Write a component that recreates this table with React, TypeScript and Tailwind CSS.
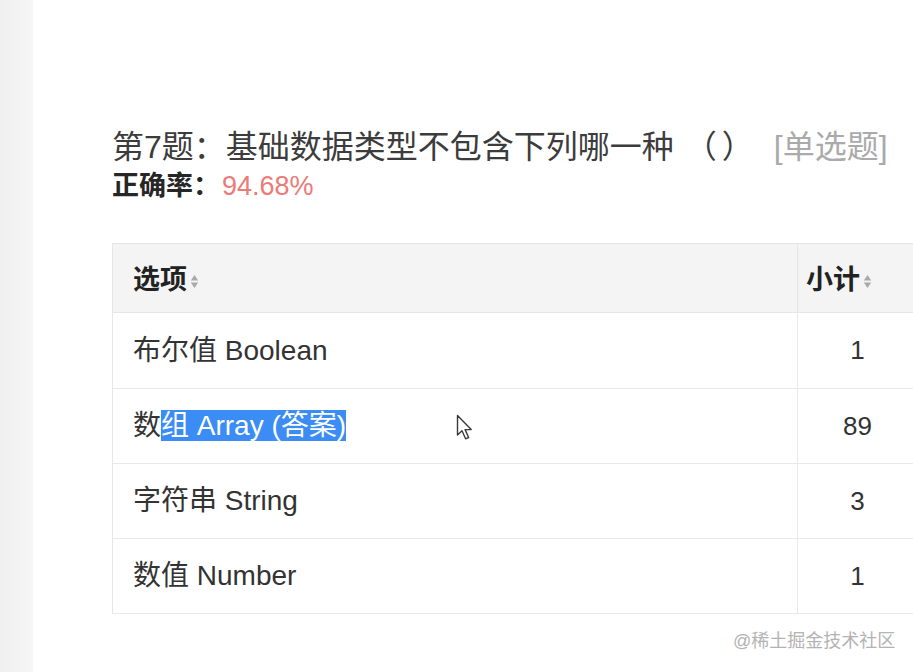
import React from "react";

const FONT = '"Liberation Sans", "Noto Sans CJK SC", sans-serif';

interface OptionRow {
  label: React.ReactNode;
  count: number;
}

function SortIcon() {
  return (
    <svg width="9" height="15" viewBox="0 0 9 15" className="ml-[3px] mt-[3px]">
      <path d="M4.5 1 L8.2 6.4 L0.8 6.4 Z" fill="#a9a9a9" />
      <path d="M4.5 14 L8.2 8.6 L0.8 8.6 Z" fill="#a9a9a9" />
    </svg>
  );
}

function Cursor() {
  return (
    <svg width="19" height="27" viewBox="0 0 19 27" className="absolute left-[456px] top-[414px]">
      <path
        d="M1.5 1.5 L1.5 21 L6 16.8 L9.6 24.8 L12.6 23.5 L9.1 15.6 L15.2 15.6 Z"
        fill="#ffffff"
        stroke="#3a3a3a"
        strokeWidth="1.4"
        strokeLinejoin="round"
      />
    </svg>
  );
}

export default function App() {
  const rows: OptionRow[] = [
    { label: "布尔值 Boolean", count: 1 },
    {
      label: (
        <>
          数<span className="bg-[#3b8cf4] text-white">组 Array (答案)</span>
        </>
      ),
      count: 89,
    },
    { label: "字符串 String", count: 3 },
    { label: "数值 Number", count: 1 },
  ];

  return (
    <div className="relative flex h-[672px] w-[913px] overflow-hidden bg-white" style={{ fontFamily: FONT }}>
      {/* left gutter */}
      <div className="h-full w-[33px] shrink-0 bg-gradient-to-r from-[#f0f0f0] to-[#f6f6f6]" />

      <div className="flex flex-col pl-[79px] pt-[127px]">
        <div className="flex items-center text-[32px] leading-[40px] text-[#3c3c3c] whitespace-nowrap">
          <span>第7题：基础数据类型不包含下列哪一种</span>
          <span className="ml-[11px]">（</span>
          <span className="ml-[5px]">）</span>
          <span className="ml-[20px] text-[#aaaaaa]">[单选题]</span>
        </div>
        <div className="mt-[3px] flex items-center text-[27px] leading-[32px] whitespace-nowrap">
          <span className="font-bold text-[#262626]">正确率：</span>
          <span className="ml-[2px] text-[#ec7a76]">94.68%</span>
        </div>

        <div className="mt-[41px] w-[806px] border-l border-t border-[#e6e6e6] text-[28px] text-[#333333]">
          <div className="grid grid-cols-[685px_121px] h-[69px] bg-[#f4f4f4] border-b border-[#e6e6e6]">
            <div className="flex items-center pl-[20px] pt-[4px] font-bold text-[27px] text-[#222222] border-r border-[#e6e6e6]">
              选项
              <SortIcon />
            </div>
            <div className="flex items-center pl-[8px] pt-[4px] font-bold text-[27px] text-[#222222]">
              小计
              <SortIcon />
            </div>
          </div>
          {rows.map((r, i) => (
            <div
              key={i}
              className={`grid grid-cols-[685px_121px] border-b border-[#e9e9e9] ${i === 0 ? "h-[76px]" : "h-[75px]"}`}
            >
              <div className="flex items-center pl-[20px] border-r border-[#e9e9e9] whitespace-nowrap">
                <span className="leading-[32px]">{r.label}</span>
              </div>
              <div className="flex items-center justify-center pr-[2px] text-[26px]">{r.count}</div>
            </div>
          ))}
        </div>
      </div>

      <Cursor />

      <div className="absolute left-[733px] top-[629px] text-[18px] leading-[24px] text-[#b3b3b3] whitespace-nowrap">
        @稀土掘金技术社区
      </div>
    </div>
  );
}
